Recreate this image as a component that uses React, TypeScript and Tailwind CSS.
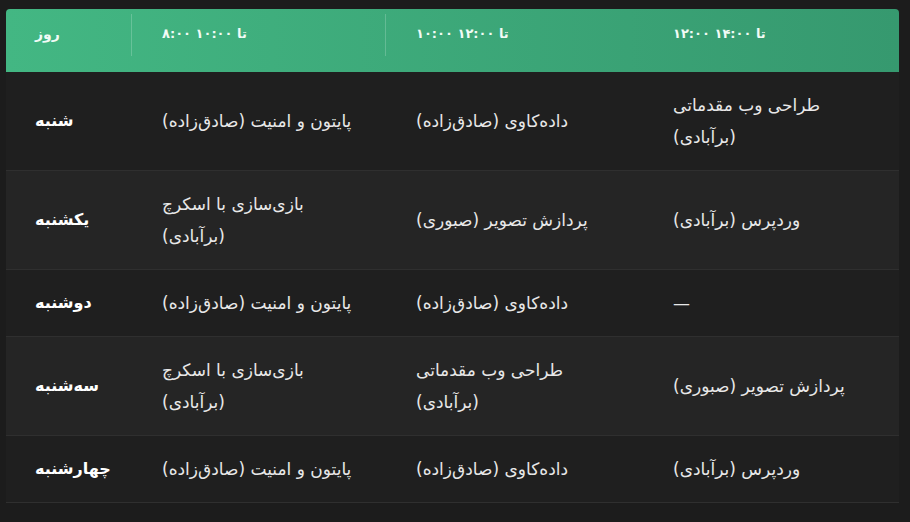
import type { FC } from "react";

interface Row {
  day: string;
  slots: string[];
}

const headers = ["روز", "۸:۰۰ تا ۱۰:۰۰", "۱۰:۰۰ تا ۱۲:۰۰", "۱۲:۰۰ تا ۱۴:۰۰"];

const rows: Row[] = [
  {
    day: "شنبه",
    slots: ["پایتون و امنیت (صادق‌زاده)", "داده‌کاوی (صادق‌زاده)", "طراحی وب مقدماتی (برآبادی)"],
  },
  {
    day: "یکشنبه",
    slots: ["بازی‌سازی با اسکرچ (برآبادی)", "پردازش تصویر (صبوری)", "وردپرس (برآبادی)"],
  },
  {
    day: "دوشنبه",
    slots: ["پایتون و امنیت (صادق‌زاده)", "داده‌کاوی (صادق‌زاده)", "—"],
  },
  {
    day: "سه‌شنبه",
    slots: ["بازی‌سازی با اسکرچ (برآبادی)", "طراحی وب مقدماتی (برآبادی)", "پردازش تصویر (صبوری)"],
  },
  {
    day: "چهارشنبه",
    slots: ["پایتون و امنیت (صادق‌زاده)", "داده‌کاوی (صادق‌زاده)", "وردپرس (برآبادی)"],
  },
];

const colWidths = ["w-[126px]", "w-[254px]", "w-[257px]", "w-[256px]"];

const ScheduleTable: FC = () => {
  return (
    <div className="min-h-[522px] w-[910px] bg-[#1c1c1c] pt-[9px] pl-[6px] font-['DejaVu_Sans',sans-serif]">
      <table className="w-[893px] table-fixed border-collapse text-left">
        <colgroup>
          {colWidths.map((w, i) => (
            <col key={i} className={w} />
          ))}
        </colgroup>
        <thead>
          <tr className="h-[63px] bg-gradient-to-r from-[#43b783] to-[#36996f]">
            {headers.map((h, i) => (
              <th
                key={i}
                className={`relative h-[63px] align-top pt-[9px] text-[13px] leading-[32px] font-bold text-[#f2fbf6] ${
                  i === 0 ? "pl-[29px] rounded-tl-[4px] text-[14px]" : "pl-[30px]"
                } ${i === 3 ? "rounded-tr-[4px]" : ""}`}
              >
                {h}
                {i < 2 && (
                  <span className="absolute right-0 top-[5px] h-[42px] w-px bg-white/20" />
                )}
              </th>
            ))}
          </tr>
        </thead>
        <tbody>
          {rows.map((row, r) => (
            <tr
              key={r}
              className={`border-b border-[#2f2f2f] ${r % 2 === 1 ? "bg-[#252525]" : "bg-[#1f1f1f]"}`}
            >
              <td className="pl-[29px] py-[17px] text-[16px] leading-[32px] font-bold text-white">
                {row.day}
              </td>
              {row.slots.map((s, i) => (
                <td
                  key={i}
                  className="pl-[30px] pr-[28px] py-[17px] text-[17px] leading-[32px] text-[#e8e8e8]"
                >
                  {s}
                </td>
              ))}
            </tr>
          ))}
        </tbody>
      </table>
    </div>
  );
};

export default function App() {
  return <ScheduleTable />;
}
